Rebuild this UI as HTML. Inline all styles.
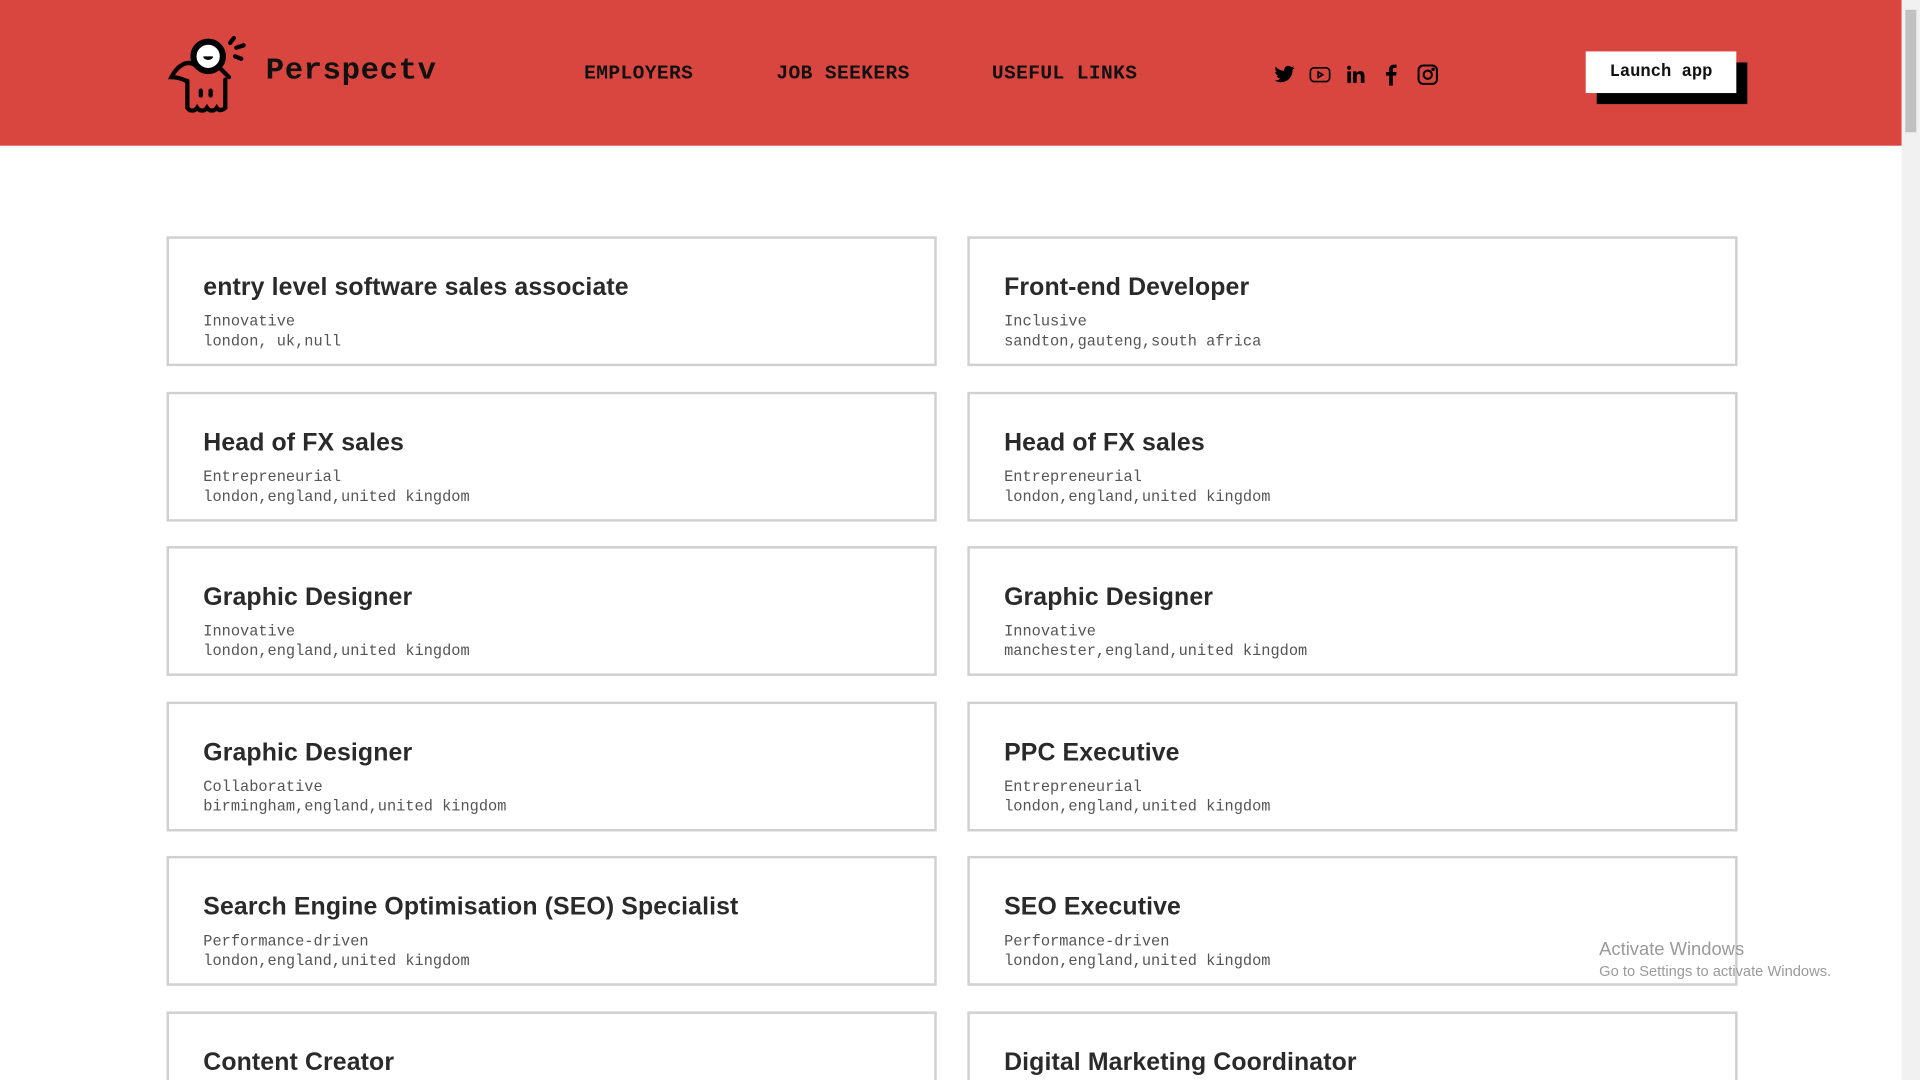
<!DOCTYPE html>
<html><head><meta charset="utf-8"><style>
html,body{margin:0;padding:0;width:1920px;height:1080px;overflow:hidden;background:#fff}
#w{position:absolute;left:0;top:0;width:1568px;height:882px;transform:scale(1.22449);transform-origin:0 0;overflow:hidden;background:#fff}
.hdr{position:absolute;left:0;top:0;width:1553px;height:119px;background:#d9453f}
.brand{position:absolute;left:217px;top:43px;font:bold 25px "Liberation Mono",monospace;color:#111;letter-spacing:.5px}
.nav{position:absolute;top:51px;font:bold 16px "Liberation Mono",monospace;color:#111;letter-spacing:.3px}
.btn{position:absolute;left:1295px;top:42px;width:123px;height:34px;background:#fff;box-shadow:9px 9px 0 #000;font:bold 14px "Liberation Mono",monospace;color:#111;text-align:center;line-height:35px}
.ic{position:absolute;top:52px}
.card{position:absolute;width:625px;height:102px;border:2px solid #d0d0d0;box-sizing:content-box}
.card h3{margin:0;position:absolute;left:28px;top:29px;font:600 20.3px "Liberation Sans",sans-serif;color:#2a2a2a;letter-spacing:.1px}
.card p{margin:0;position:absolute;left:28px;top:60px;font:12.5px/16px "Liberation Mono",monospace;color:#555}
.sb{position:absolute;left:1553px;top:0;width:15px;height:882px;background:#f1f1f1}
.th{position:absolute;left:1556px;top:8px;width:9px;height:100px;background:#c1c1c1}
.wm{position:absolute;left:1306px;top:767px;font:15px "Liberation Sans",sans-serif;color:#9a9a9a}
.wm small{display:block;font-size:12px;margin-top:2px}
</style></head><body><div id="w">
<div class="hdr">
<svg style="position:absolute;left:135px;top:26px" width="68" height="68" viewBox="0 0 68 68" fill="none" stroke="#000" stroke-width="3.5" stroke-linecap="round">
<circle cx="35" cy="20" r="12" fill="#fff" stroke-width="5"/>
<path d="M31 20a4 3 0 0 0 8 0z" fill="#000" stroke="none"/>
<path d="M44 29l8 8"/>
<path d="M56 5l-3 4M64 11l-6 2M62 22l-5-2"/>
<path d="M24 27c-6-4-14 0-19 10c6 0 10 2 12 3"/>
<path d="M18 40v22c2 3 6 3 8 0c2 3 6 3 8 0c2 3 6 3 8 0c2 3 5 2 7 0v-23"/>
<path d="M29 48v4M37 48v4"/>
</svg>
<div class="brand">Perspectv</div>
<div class="nav" style="left:477px">EMPLOYERS</div>
<div class="nav" style="left:634px">JOB SEEKERS</div>
<div class="nav" style="left:810px">USEFUL LINKS</div>
<svg class="ic" style="left:1040px" width="18" height="18" viewBox="0 0 24 24"><path d="M23 4.5a9 9 0 0 1-2.6.7 4.5 4.5 0 0 0 2-2.5 9 9 0 0 1-2.9 1.1A4.5 4.5 0 0 0 11.8 7.9 12.8 12.8 0 0 1 2.5 3.2a4.5 4.5 0 0 0 1.4 6 4.5 4.5 0 0 1-2-.6 4.5 4.5 0 0 0 3.6 4.5 4.5 4.5 0 0 1-2 .1 4.5 4.5 0 0 0 4.2 3.1A9 9 0 0 1 1 18.2 12.8 12.8 0 0 0 8 20.2c8.3 0 12.8-6.9 12.8-12.8v-.6A9 9 0 0 0 23 4.5z"/></svg>
<svg class="ic" style="left:1069px" width="18" height="18" viewBox="0 0 24 24" fill="none" stroke="#000" stroke-width="1.8"><rect x="1.5" y="4.5" width="21" height="15" rx="4"/><path d="M10 9l5 3-5 3z"/></svg>
<svg class="ic" style="left:1099px" width="16" height="18" viewBox="0 0 24 24"><rect x="2" y="8" width="4.5" height="14"/><circle cx="4.2" cy="3.5" r="2.5"/><path d="M9 8h4.3v2c.7-1.3 2.3-2.4 4.6-2.4 4.4 0 5.1 2.9 5.1 6.6V22h-4.5v-7c0-1.7 0-3.8-2.3-3.8s-2.7 1.8-2.7 3.7V22H9z"/></svg>
<svg class="ic" style="left:1129px" width="14" height="18" viewBox="0 0 14 24"><path d="M9 24V13h3.5l.5-4H9V6.5C9 5.4 9.3 4.6 11 4.6h2V1.1C12.6 1 11.4 1 10 1 7 1 5 2.8 5 6.1V9H1.5v4H5v11z"/></svg>
<svg class="ic" style="left:1157px" width="18" height="18" viewBox="0 0 24 24" fill="none" stroke="#000" stroke-width="2.2"><rect x="2" y="2" width="20" height="20" rx="5"/><circle cx="12" cy="12" r="4.5"/><circle cx="17.8" cy="6.2" r=".8" fill="#000"/></svg>
<div class="btn">Launch app</div>
</div>

<div class="card" style="left:136px;top:193px"><h3>entry level software sales associate</h3><p>Innovative<br>london, uk,null</p></div>
<div class="card" style="left:790px;top:193px"><h3>Front-end Developer</h3><p>Inclusive<br>sandton,gauteng,south africa</p></div>
<div class="card" style="left:136px;top:320px"><h3>Head of FX sales</h3><p>Entrepreneurial<br>london,england,united kingdom</p></div>
<div class="card" style="left:790px;top:320px"><h3>Head of FX sales</h3><p>Entrepreneurial<br>london,england,united kingdom</p></div>
<div class="card" style="left:136px;top:446px"><h3>Graphic Designer</h3><p>Innovative<br>london,england,united kingdom</p></div>
<div class="card" style="left:790px;top:446px"><h3>Graphic Designer</h3><p>Innovative<br>manchester,england,united kingdom</p></div>
<div class="card" style="left:136px;top:573px"><h3>Graphic Designer</h3><p>Collaborative<br>birmingham,england,united kingdom</p></div>
<div class="card" style="left:790px;top:573px"><h3>PPC Executive</h3><p>Entrepreneurial<br>london,england,united kingdom</p></div>
<div class="card" style="left:136px;top:699px"><h3>Search Engine Optimisation (SEO) Specialist</h3><p>Performance-driven<br>london,england,united kingdom</p></div>
<div class="card" style="left:790px;top:699px"><h3>SEO Executive</h3><p>Performance-driven<br>london,england,united kingdom</p></div>
<div class="card" style="left:136px;top:826px;height:60px"><h3>Content Creator</h3></div>
<div class="card" style="left:790px;top:826px;height:60px"><h3>Digital Marketing Coordinator</h3></div>
<div class="wm">Activate Windows<small>Go to Settings to activate Windows.</small></div>
<div class="sb"></div><div class="th"></div>
</div></body></html>
